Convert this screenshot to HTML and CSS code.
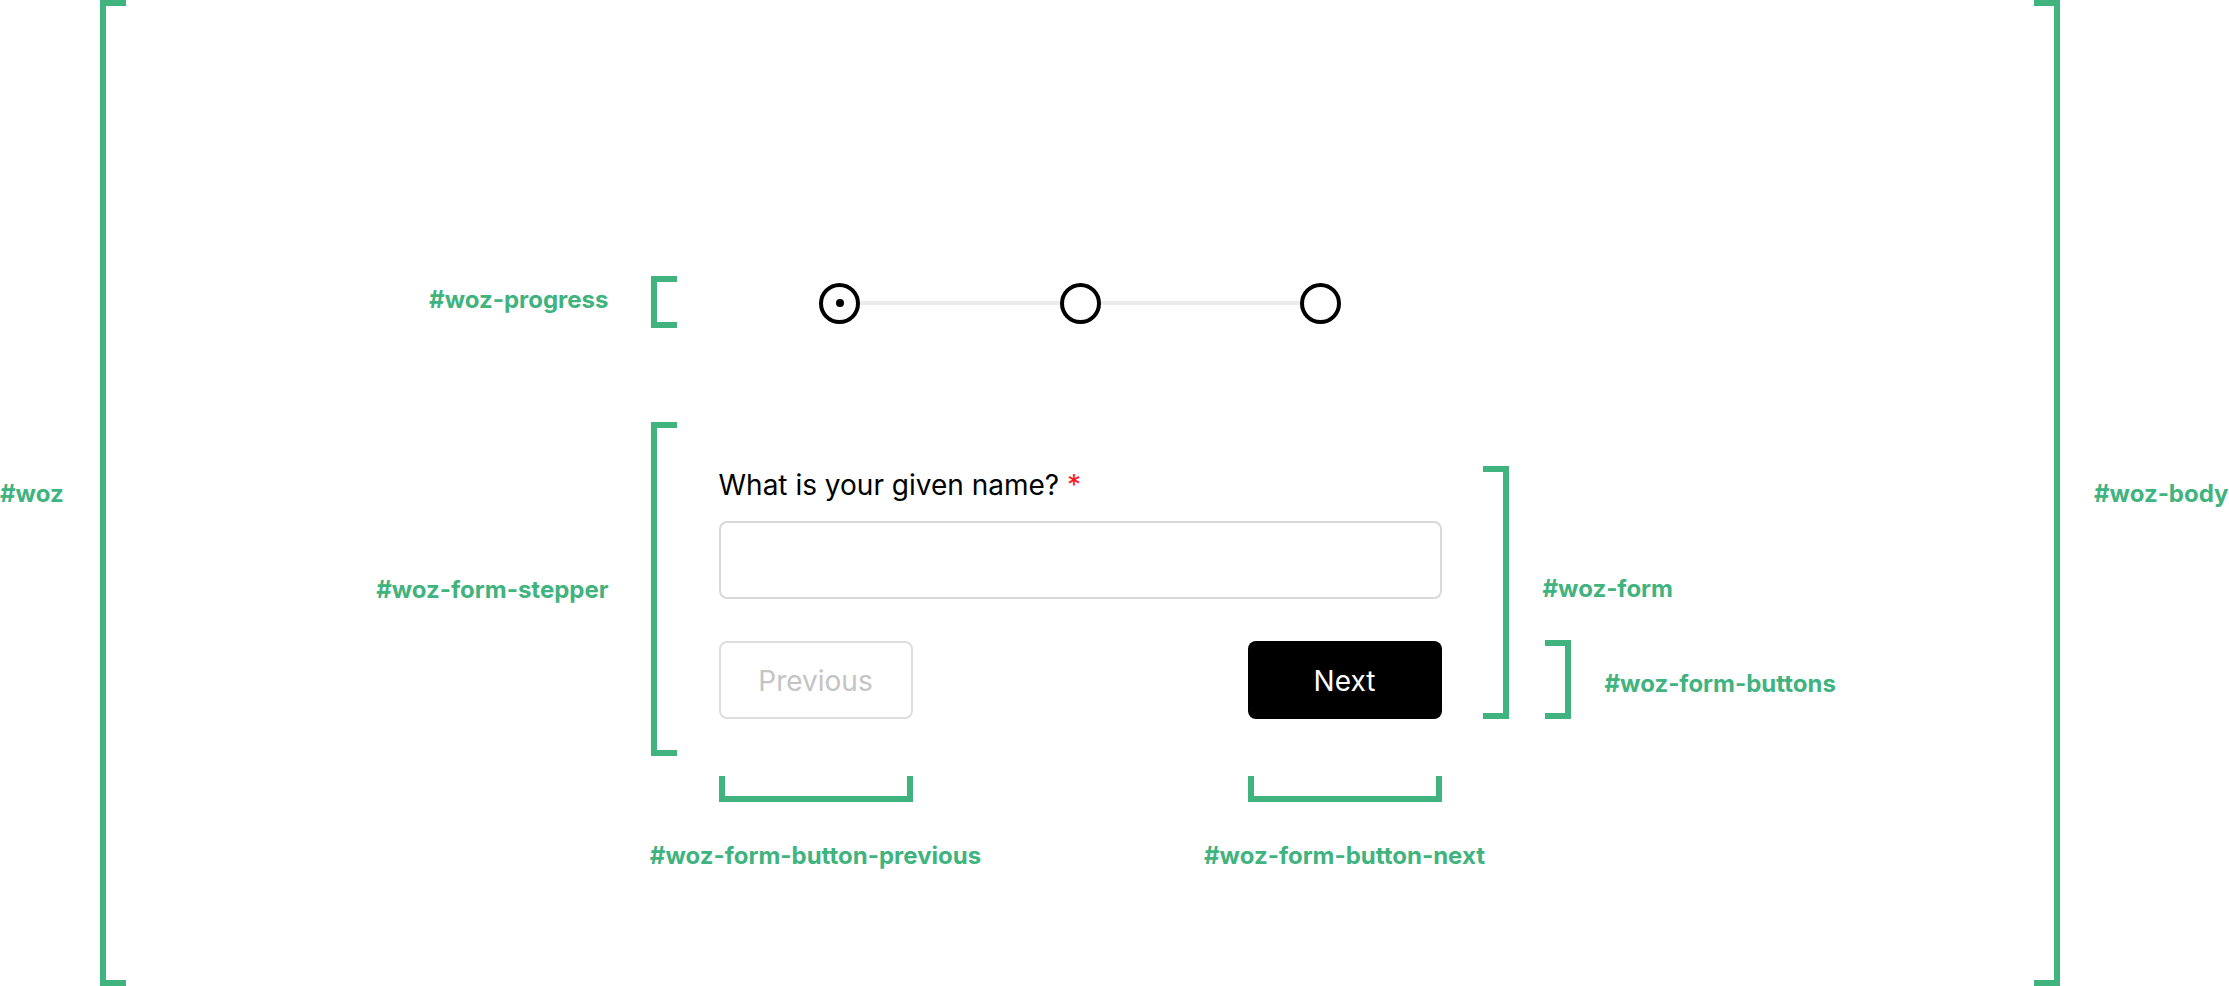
FILE: index.html
```html
<!DOCTYPE html>
<html lang="en">
<head>
<meta charset="utf-8">
<title>woz form stepper</title>
<link rel="stylesheet" href="styles.css">
</head>
<body>
<div class="woz">
  <div class="note note-woz">#woz</div>
  <div class="bracket bracket-l bracket-full"></div>

  <main class="woz-body">
    <section class="row row-progress">
      <div class="side-left">
        <div class="note note-progress">#woz-progress</div>
        <div class="bracket bracket-l"></div>
      </div>
      <div class="center center-progress">
        <div class="track">
          <span class="step step-current"></span>
          <span class="connector"></span>
          <span class="step"></span>
          <span class="connector"></span>
          <span class="step"></span>
        </div>
      </div>
      <div class="side-right"></div>
    </section>

    <section class="row row-stepper">
      <div class="side-left">
        <div class="note">#woz-form-stepper</div>
        <div class="bracket bracket-l"></div>
      </div>
      <div class="center">
        <form class="form">
          <label class="form-label" for="given-name">What is your given name? <span class="required">*</span></label>
          <input class="form-input" id="given-name" type="text">
          <div class="form-buttons">
            <button type="button" class="btn btn-prev">Previous</button>
            <button type="button" class="btn btn-next">Next</button>
          </div>
        </form>
      </div>
      <div class="side-right">
        <div class="form-notes">
          <div class="bracket bracket-r form-bracket"></div>
          <div class="form-notes-inner">
            <div class="note note-form">#woz-form</div>
            <div class="buttons-note">
              <div class="bracket bracket-r buttons-bracket"></div>
              <div class="note note-buttons">#woz-form-buttons</div>
            </div>
          </div>
        </div>
      </div>
    </section>

    <section class="row row-buttons">
      <div class="side-left"></div>
      <div class="center center-buttons">
        <div class="btn-note">
          <div class="bracket bracket-b"></div>
          <div class="note">#woz-form-button-previous</div>
        </div>
        <div class="btn-note">
          <div class="bracket bracket-b"></div>
          <div class="note">#woz-form-button-next</div>
        </div>
      </div>
      <div class="side-right"></div>
    </section>
  </main>

  <div class="bracket bracket-r bracket-full"></div>
  <div class="note note-body">#woz-body</div>
</div>
</body>
</html>
```

FILE: styles.css
```css
html, body {
  margin: 0;
  padding: 0;
  background: #ffffff;
}

body {
  font-family: "Inter", "Liberation Sans", sans-serif;
  color: #000;
}

.woz {
  display: grid;
  grid-template-columns: 100px 26px 1fr 26px 169px;
  height: 986px;
  overflow: hidden;
}

/* annotation labels */
.note {
  font-family: "Inter", "Liberation Sans", sans-serif;
  font-weight: 700;
  font-size: 24px;
  line-height: 29px;
  color: #40b37e;
  white-space: nowrap;
}

.note-woz {
  align-self: center;
}

.note-body {
  align-self: center;
  padding-left: 34px;
}

.note-progress {
  margin-bottom: 6px;
}

/* brackets */
.bracket {
  box-sizing: border-box;
  border: 6px solid #40b37e;
}

.bracket-l {
  width: 26px;
  border-right: 0;
}

.bracket-r {
  width: 26px;
  border-left: 0;
}

.bracket-b {
  height: 26px;
  border-top: 0;
}

.bracket-full {
  height: 986px;
}

/* body */
.woz-body {
  display: flex;
  flex-direction: column;
  padding-top: 276px;
}

.row {
  display: grid;
  grid-template-columns: 1fr 723px 1fr;
}

.side-left {
  display: flex;
  justify-content: flex-end;
  align-items: center;
  gap: 42px;
  padding-right: 42px;
}

.side-left .bracket {
  align-self: stretch;
}

/* progress */
.row-progress {
  height: 52px;
}

.center-progress {
  display: flex;
  justify-content: center;
  align-items: center;
  padding-top: 2px;
}

.track {
  width: 522px;
  display: flex;
  align-items: center;
}

.step {
  box-sizing: border-box;
  width: 41px;
  height: 41px;
  flex: none;
  border: 4px solid #000;
  border-radius: 50%;
  background: #fff;
  display: flex;
  align-items: center;
  justify-content: center;
}

.step-current::after {
  content: "";
  width: 8px;
  height: 8px;
  border-radius: 50%;
  background: #000;
}

.connector {
  flex: 1;
  height: 4px;
  background: #ebebeb;
}

/* stepper */
.row-stepper {
  margin-top: 94px;
  height: 334px;
}

.form {
  margin: 44px 0 0;
  display: flex;
  flex-direction: column;
}

.form-label {
  font-size: 28px;
  line-height: 38px;
  color: #000;
  margin-bottom: 17px;
}

.required {
  color: #ff1a1a;
}

.form-input {
  box-sizing: border-box;
  width: 100%;
  height: 78px;
  margin: 0;
  border: 2px solid #d9d9d9;
  border-radius: 8px;
  background: #fff;
  font: inherit;
  font-size: 28px;
  padding: 0 20px;
  outline: none;
}

.form-buttons {
  display: flex;
  justify-content: space-between;
  margin-top: 42px;
}

.btn {
  box-sizing: border-box;
  width: 194px;
  height: 78px;
  margin: 0;
  padding: 2px 0 0;
  border-radius: 8px;
  font-family: "Inter", "Liberation Sans", sans-serif;
  font-size: 28px;
  font-weight: 400;
}

.btn-prev {
  border: 2px solid #dedede;
  background: #fff;
  color: #c4c4c4;
}

.btn-next {
  border: 0;
  background: #000;
  color: #fff;
}

/* right annotations */
.side-right {
  display: flex;
}

.form-notes {
  display: flex;
  margin-top: 44px;
  padding-left: 41px;
  height: 253px;
}

.form-bracket {
  height: 253px;
}

.form-notes-inner {
  display: grid;
  margin-left: 34px;
}

.form-notes-inner > * {
  grid-area: 1 / 1;
}

.note-form {
  align-self: center;
  margin-top: -8px;
}

.buttons-note {
  align-self: end;
  display: flex;
  align-items: center;
  gap: 34px;
  margin-left: 2px;
}

.note-buttons {
  margin-top: 8px;
}

.buttons-bracket {
  height: 79px;
}

/* bottom button annotations */
.row-buttons {
  margin-top: 20px;
}

.center-buttons {
  display: flex;
  justify-content: space-between;
}

.btn-note {
  width: 194px;
  display: flex;
  flex-direction: column;
  align-items: center;
}

.btn-note .bracket {
  width: 194px;
}

.btn-note .note {
  margin-top: 39px;
}
```
